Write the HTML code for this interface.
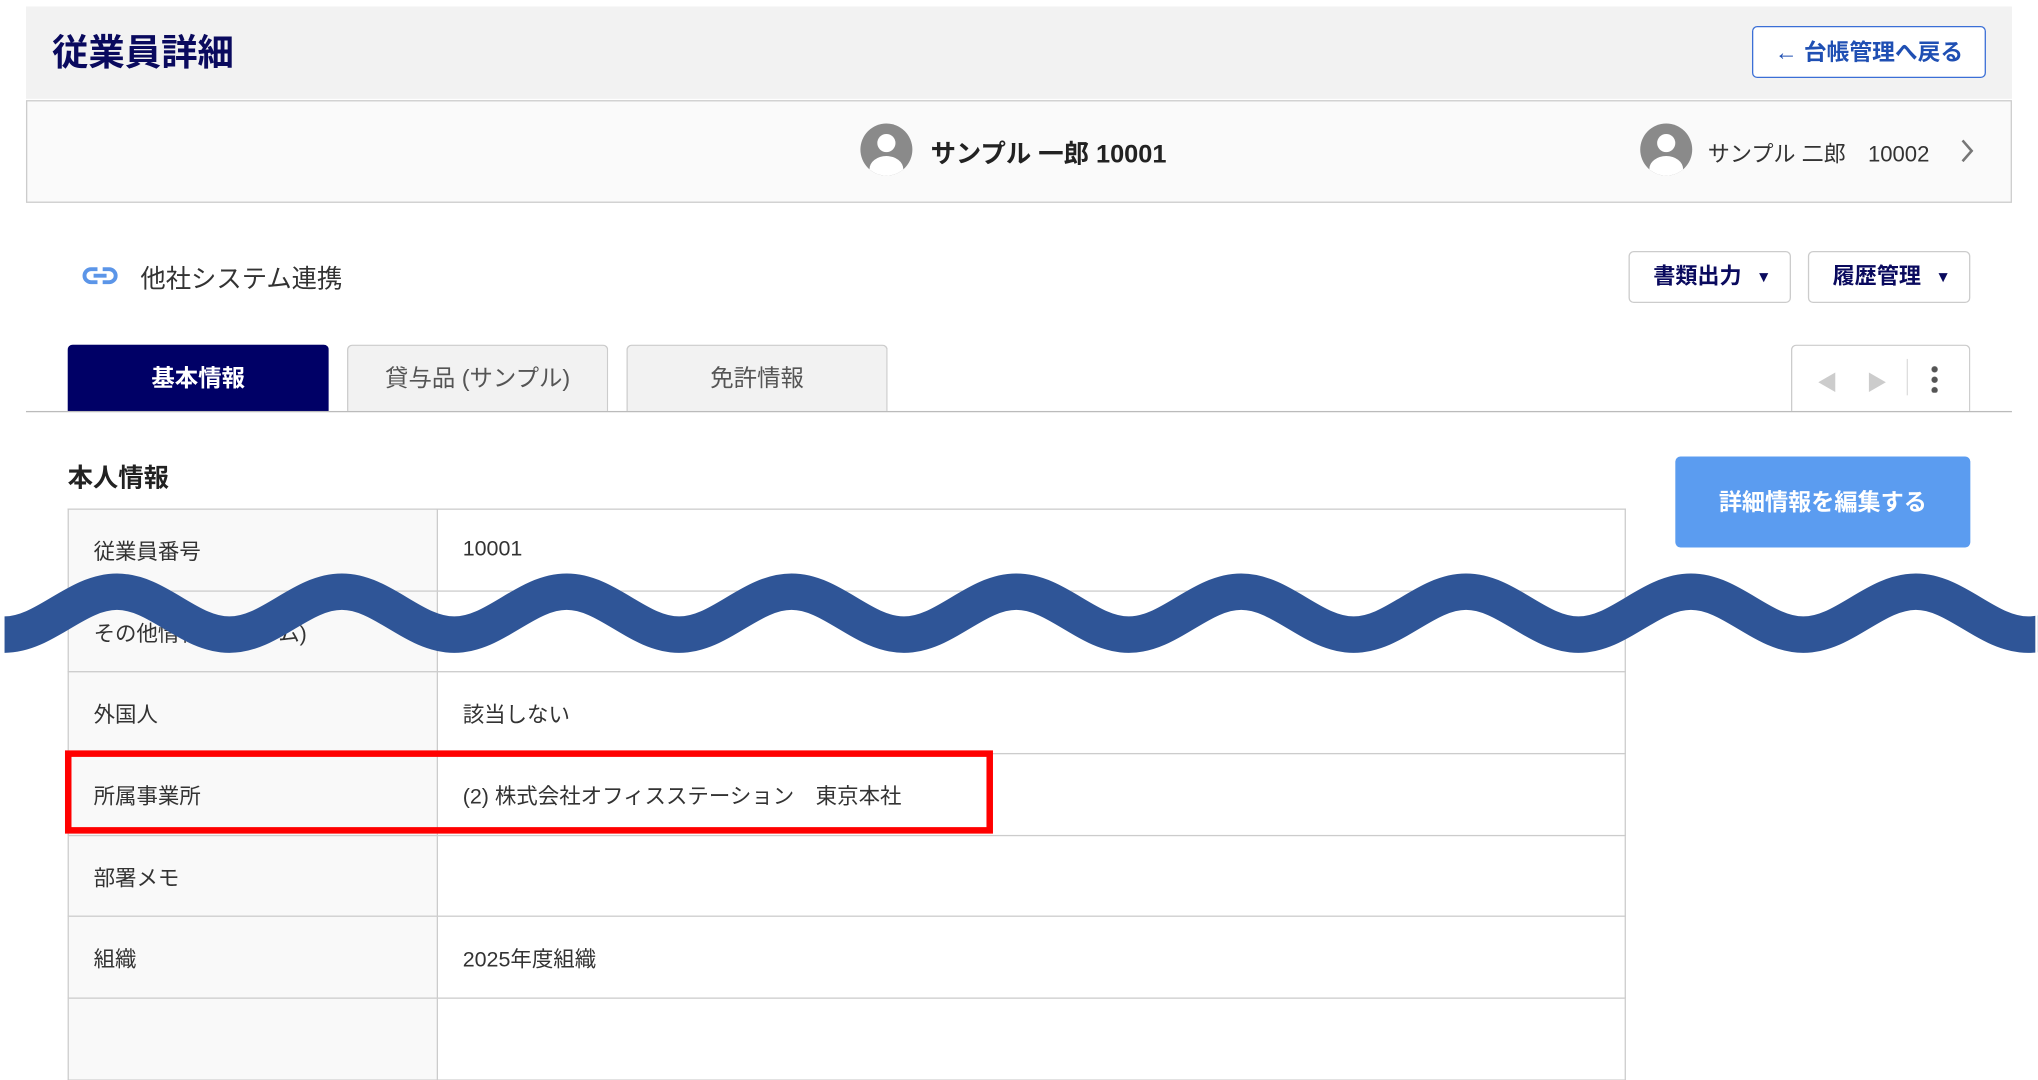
<!DOCTYPE html>
<html><head><meta charset="utf-8"><style>
*{box-sizing:border-box;margin:0;padding:0}
html,body{width:2038px;height:1004px;overflow:hidden;background:#fff}
#w{position:absolute;left:0;top:0;width:1568px;height:772px;transform:scale(1.2997,1.3005);transform-origin:0 0;font-family:"Liberation Sans","Noto Sans CJK JP",sans-serif;color:#333}
.a{position:absolute}
.hdr{left:20px;top:5px;width:1528px;height:71px;background:#f2f2f2}
.title{left:40px;top:19px;font-size:28px;font-weight:bold;color:#0a0a5e}
.back{left:1348px;top:20px;width:180px;height:40px;border:1px solid #3b6fd6;border-radius:4px;background:#fff;color:#1f4fb3;font-weight:bold;font-size:17.5px;line-height:38px;text-align:center}
.emp{left:20px;top:77px;width:1528px;height:79px;background:#fafafa;border:1px solid #ccc}
.av{width:40px;height:40px;border-radius:50%;background:#8a8a8a;overflow:hidden}
.av:before{content:"";position:absolute;left:13px;top:8px;width:14px;height:14px;border-radius:50%;background:#fff}
.av:after{content:"";position:absolute;left:7px;top:25px;width:26px;height:20px;border-radius:50% 50% 0 0;background:#fff}
.btn{top:193px;height:40px;width:125px;border:1px solid #ccc;border-radius:4px;background:#fff;color:#0a0a5e;font-weight:bold;font-size:17px;line-height:38px;padding-left:18px}
.btn span{position:absolute;right:14px;top:0;font-size:12px}
.tab{top:265px;height:51px;width:201px;border:1px solid #ccc;border-bottom:none;border-radius:4px 4px 0 0;background:#f2f2f2;color:#555;font-size:18px;line-height:50px;text-align:center}
table{position:absolute;left:52px;top:391px;width:1199px;border-collapse:collapse;font-size:16.5px}
td{border:1px solid #ccc;height:62.7px;padding-left:19px;vertical-align:middle}
td.l{width:284px;background:#f9f9f9}
</style></head><body><div id="w">
<div class="a hdr"></div>
<div class="a title">従業員詳細</div>
<div class="a back">← 台帳管理へ戻る</div>
<div class="a emp"></div>
<div class="a av" style="left:662px;top:95px"></div>
<div class="a" style="left:716px;top:102px;font-size:19.5px;font-weight:bold;color:#222">サンプル 一郎 10001</div>
<div class="a av" style="left:1262px;top:95px"></div>
<div class="a" style="left:1314px;top:104px;font-size:17px;color:#333">サンプル 二郎　10002</div>
<svg class="a" style="left:1507px;top:106px" width="14" height="20"><path d="M3 2l7 8-7 8" fill="none" stroke="#777" stroke-width="2"/></svg>
<svg class="a" style="left:63px;top:204px" width="28" height="16"><rect x="2" y="3" width="24" height="10" rx="5" fill="none" stroke="#5b95e8" stroke-width="3"/><rect x="9" y="6.5" width="10" height="3" fill="#5b95e8"/><rect x="12" y="1" width="4" height="4" fill="#fff"/><rect x="12" y="11" width="4" height="4" fill="#fff"/></svg>
<div class="a" style="left:108px;top:198px;font-size:19.5px;color:#333">他社システム連携</div>
<div class="a btn" style="left:1253px">書類出力<span>▼</span></div>
<div class="a btn" style="left:1391px">履歴管理<span>▼</span></div>
<div class="a tab" style="left:52px;background:#000066;color:#fff;font-weight:bold;border-color:#000066">基本情報</div>
<div class="a tab" style="left:267px">貸与品 (サンプル)</div>
<div class="a tab" style="left:482px">免許情報</div>
<div class="a tab" style="left:1378px;width:138px;background:#fff"></div>
<div class="a" style="left:1398px;top:281px;font-size:16px;color:#ccc">◀</div>
<div class="a" style="left:1436px;top:281px;font-size:16px;color:#ccc">▶</div>
<div class="a" style="left:1467px;top:276px;width:1px;height:28px;background:#ddd"></div>
<div class="a" style="left:1486px;top:280px;width:5px;height:22px;background:radial-gradient(circle,#555 2.2px,transparent 2.6px) 0 0/5px 8px"></div>
<div class="a" style="left:20px;top:316px;width:1528px;height:1px;background:#bbb"></div>
<div class="a" style="left:52px;top:351px;font-size:19.5px;font-weight:bold;color:#222">本人情報</div>
<div class="a" style="left:1289px;top:351px;width:227px;height:70px;border-radius:4px;background:#5b9cf0;color:#fff;font-weight:bold;font-size:17.8px;line-height:70px;text-align:center">詳細情報を編集する</div>
<table>
<tr><td class="l">従業員番号</td><td>10001</td></tr>
<tr><td class="l">その他情報 (カスタム)</td><td></td></tr>
<tr><td class="l">外国人</td><td>該当しない</td></tr>
<tr><td class="l">所属事業所</td><td>(2) 株式会社オフィスステーション　東京本社</td></tr>
<tr><td class="l">部署メモ</td><td></td></tr>
<tr><td class="l">組織</td><td>2025年度組織</td></tr>
<tr><td class="l"></td><td></td></tr>
</table>
<div class="a" style="left:50px;top:577px;width:714px;height:64px;border:5px solid #f00"></div>
<svg class="a" style="left:0;top:0" width="1568" height="772"><path d="M3.5 488 C34.5 488 58.5 455 90 455 S145 488 176.5 488 S231.5 455 263 455 S318 488 349.5 488 S404.5 455 436 455 S491 488 522.5 488 S577.5 455 609 455 S664 488 695.5 488 S750.5 455 782 455 S837 488 868.5 488 S923.5 455 955 455 S1010 488 1041.5 488 S1096.5 455 1128 455 S1183 488 1214.5 488 S1269.5 455 1301 455 S1356 488 1387.5 488 S1442.5 455 1474 455 S1529 488 1560.5 488 S1615.5 455 1647 455" fill="none" stroke="#2f5597" stroke-width="28"/><rect x="0" y="0" width="2" height="772" fill="#fff"/><rect x="1566" y="0" width="2" height="772" fill="#fff"/></svg>
</div></body></html>
